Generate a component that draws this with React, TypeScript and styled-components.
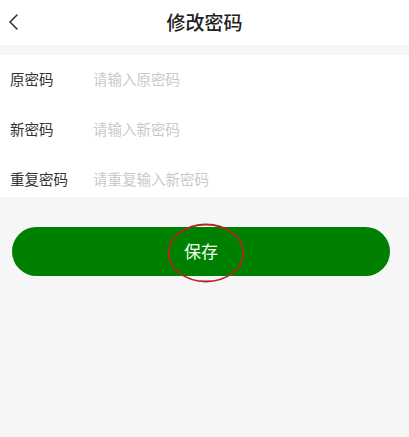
import React from "react";
import styled, { createGlobalStyle } from "styled-components";

const Global = createGlobalStyle`
  html, body { margin: 0; padding: 0; background: #f6f6f6; }
  body { font-family: "Noto Sans CJK SC", "Noto Sans", sans-serif; }
  * { box-sizing: border-box; }
`;

const Page = styled.div`
  width: 409px;
  height: 437px;
  background: #f6f6f6;
  display: flex;
  flex-direction: column;
`;

const Header = styled.div`
  height: 45px;
  background: #fff;
  display: grid;
  grid-template-columns: 40px 1fr 40px;
  align-items: center;
`;

const Back = styled.div`
  display: flex;
  align-items: center;
  padding-left: 8px;
  padding-bottom: 2px;
`;

const Title = styled.div`
  text-align: center;
  font-size: 19px;
  font-weight: 500;
  color: #222;
  padding-bottom: 3px;
`;

const Card = styled.div`
  margin-top: 10px;
  background: #fff;
  padding: 6px 0 2px;
  display: flex;
  flex-direction: column;
  gap: 16px;
`;

const Row = styled.div`
  height: 34px;
  display: flex;
  align-items: center;
  padding-left: 10px;
`;

const Label = styled.span`
  width: 83px;
  font-size: 14.5px;
  color: #333;
`;

const Input = styled.input`
  flex: 1;
  border: none;
  outline: none;
  background: transparent;
  font-family: inherit;
  font-size: 14.5px;
  color: #333;
  padding: 0;
  &::placeholder { color: #c9c9c9; }
`;

const ButtonWrap = styled.div`
  margin-top: 30px;
  padding: 0 19px 0 12px;
  position: relative;
`;

const SaveButton = styled.button`
  width: 100%;
  height: 49px;
  border: none;
  border-radius: 25px;
  background: #008000;
  color: #f2fff2;
  font-family: inherit;
  font-size: 17px;
  display: flex;
  align-items: center;
  justify-content: center;
  padding: 0 0 3px 0;
`;

const Mark = styled.svg`
  position: absolute;
  left: 166px;
  top: -5px;
  pointer-events: none;
`;

export default function App() {
  return (
    <Page>
      <Global />
      <Header>
        <Back>
          <svg width="12" height="16" viewBox="0 0 12 16">
            <path d="M9 1 L2 8 L9 15" fill="none" stroke="#333" strokeWidth="1.6" strokeLinecap="round" strokeLinejoin="round" />
          </svg>
        </Back>
        <Title>修改密码</Title>
        <div />
      </Header>
      <Card>
        <Row>
          <Label>原密码</Label>
          <Input type="password" placeholder="请输入原密码" />
        </Row>
        <Row>
          <Label>新密码</Label>
          <Input type="password" placeholder="请输入新密码" />
        </Row>
        <Row>
          <Label>重复密码</Label>
          <Input type="password" placeholder="请重复输入新密码" />
        </Row>
      </Card>
      <ButtonWrap>
        <SaveButton>保存</SaveButton>
        <Mark width="80" height="62" viewBox="0 0 80 62">
          <ellipse cx="40" cy="31" rx="37.5" ry="28.5" fill="none" stroke="#b3261e" strokeWidth="1.8" />
        </Mark>
      </ButtonWrap>
    </Page>
  );
}
